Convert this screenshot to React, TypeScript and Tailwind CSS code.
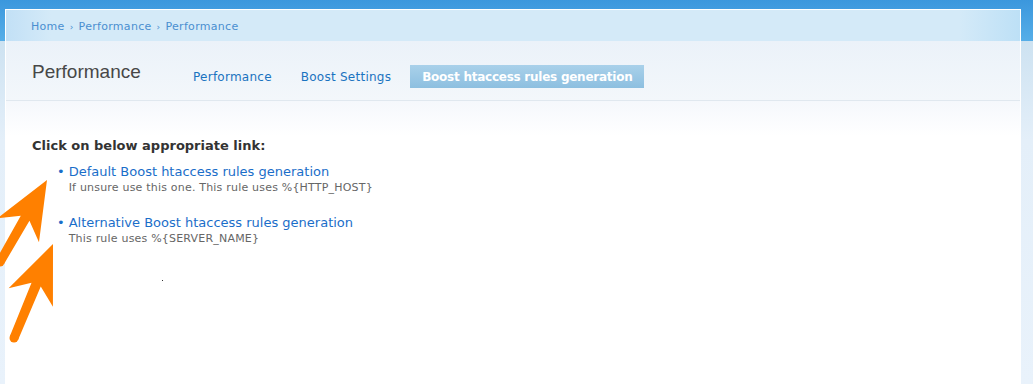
import React from "react";

type Pt = [number, number];

function arrowPoints(tail: Pt, tip: Pt, back = 58, wing = 24, notch = 44, neck = 5, tailW = 4.5) {
  const dx = tip[0] - tail[0];
  const dy = tip[1] - tail[1];
  const len = Math.hypot(dx, dy);
  const d: Pt = [dx / len, dy / len];
  const n: Pt = [-d[1], d[0]];
  const at = (b: number, s: number): Pt => [tip[0] - b * d[0] + s * n[0], tip[1] - b * d[1] + s * n[1]];
  const pts: Pt[] = [
    tip,
    at(back, wing),
    at(notch, neck),
    [tail[0] + tailW * n[0], tail[1] + tailW * n[1]],
    [tail[0] - tailW * n[0], tail[1] - tailW * n[1]],
    at(notch, -neck),
    at(back, -wing),
  ];
  return pts.map((p) => p.join(",")).join(" ");
}

function Arrows() {
  const a1 = { tail: [0, 262] as Pt, tip: [47, 180] as Pt };
  const a2 = { tail: [14, 338] as Pt, tip: [53, 244] as Pt };
  return (
    <svg className="absolute left-0 top-0 pointer-events-none" width="120" height="384" viewBox="0 0 120 384">
      {[a1, a2].map((a, i) => (
        <g key={i} fill="#ff8000">
          <polygon points={arrowPoints(a.tail, a.tip)} />
          <circle cx={a.tail[0]} cy={a.tail[1]} r="4.5" />
        </g>
      ))}
    </svg>
  );
}

const links = [
  { title: "Default Boost htaccess rules generation", desc: "If unsure use this one. This rule uses %{HTTP_HOST}" },
  { title: "Alternative Boost htaccess rules generation", desc: "This rule uses %{SERVER_NAME}" },
];

export default function App() {
  return (
    <div className="relative h-[384px] w-full overflow-hidden bg-[linear-gradient(to_bottom,#3b97dd_0px,#56aee8_41px,#cde2f1_41px,#e4eff9_140px,#e9f2fb_384px)] pt-[9px] pl-[5px] pr-[12px] font-['DejaVu_Sans',sans-serif]">
      <div className="flex h-full flex-col border-x border-t border-white bg-white">
        {/* breadcrumb */}
        <div className="flex h-[31px] items-center bg-[linear-gradient(to_right,#c2e0f6_0px,#d4eaf8_45px,#d4eaf8_94%,#bde0f6_100%)] pl-[25px] pt-[4px] text-[11px] tracking-[0.3px] text-[#4a8fd0]">
          <span>Home</span>
          <span className="mx-[5px] text-[9px]">›</span>
          <span>Performance</span>
          <span className="mx-[5px] text-[9px]">›</span>
          <span>Performance</span>
        </div>

        {/* title + tabs */}
        <div className="flex h-[60px] items-start border-b border-[#e0e8ef] bg-[linear-gradient(to_bottom,#ebf2f9,#f3f7fb)] pl-[26px]">
          <h1 className="mt-[21px] w-[161px] font-['Liberation_Sans',Arial,sans-serif] text-[19px] leading-none text-[#474747]">
            Performance
          </h1>
          <nav className="mt-[24px] flex items-center">
            <span className="pt-px text-[12px] tracking-[0.25px] text-[#1a73c0]">Performance</span>
            <span className="ml-[29px] pt-px text-[12px] tracking-[0.25px] text-[#1a73c0]">Boost Settings</span>
            <span className="ml-[19px] flex h-[23px] items-center bg-[linear-gradient(to_bottom,#a9d1ea,#8dbfe0)] px-[12px] pt-px text-[12px] font-bold tracking-[-0.25px] text-white">
              Boost htaccess rules generation
            </span>
          </nav>
        </div>

        {/* content */}
        <div className="flex-1 bg-[linear-gradient(to_bottom,#f5f8fc_0px,#ffffff_35px)] pl-[26px] pt-[35px]">
          <p className="text-[13px] font-bold text-[#333]">Click on below appropriate link:</p>
          <ul className="mt-[7px] pl-[25px]">
            {links.map((l) => (
              <li key={l.title} className="mb-[19px] flex items-start gap-[4px]">
                <span className="text-[13px] leading-[17px] text-[#1a6ec9]">•</span>
                <div>
                  <div className="text-[13px] leading-[17px] text-[#1a6ec9]">{l.title}</div>
                  <div className="text-[11px] leading-[15px] tracking-[0.2px] text-[#666]">{l.desc}</div>
                </div>
              </li>
            ))}
          </ul>
          <div className="ml-[130px] mt-[34px] h-px w-px bg-[#333]" />
        </div>
      </div>
      <Arrows />
    </div>
  );
}
